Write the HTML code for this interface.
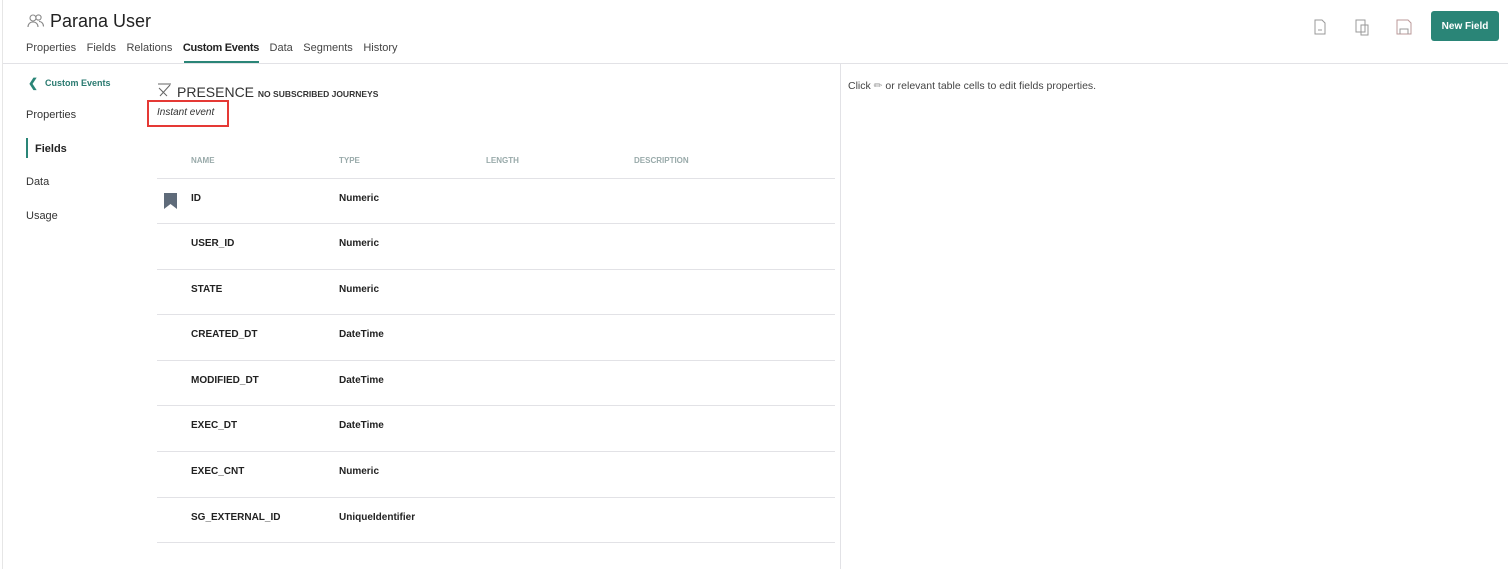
<!DOCTYPE html><html><head><style>
body{margin:0;width:1508px;height:569px;background:#fff;font-family:"Liberation Sans",sans-serif;color:#333;position:relative;overflow:hidden}
.a{position:absolute;white-space:nowrap}
.hl{position:absolute;height:1px;background:#e2e2e6}
.nm{font-size:10px;font-weight:bold;color:#222}
</style></head><body>
<div class="a" style="left:2px;top:0;width:1px;height:569px;background:#e6e6e6"></div>
<svg class="a" style="left:27px;top:13px" width="18" height="16" viewBox="0 0 18 16" fill="none" stroke="#888" stroke-width="1.1"><circle cx="6" cy="5" r="3"/><path d="M1 14c0-3 2-5 5-5s5 2 5 5"/><circle cx="11.5" cy="4.5" r="2.6"/><path d="M12 8.5c2.5 0 4.5 2 4.5 5"/></svg>
<div class="a" style="left:50px;top:11px;font-size:18px;color:#222">Parana User</div>
<div class="a" style="left:26px;top:42px;font-size:11px;color:#444"><span style="margin-right:10.5px">Properties</span><span style="margin-right:10.5px">Fields</span><span style="margin-right:10.5px">Relations</span><b style="color:#222;margin-right:10.5px;letter-spacing:-0.3px">Custom Events</b><span style="margin-right:10.5px">Data</span><span style="margin-right:10.5px">Segments</span><span>History</span></div>
<div class="a" style="left:184px;top:61px;width:75px;height:2px;background:#2a8577"></div>
<div class="hl" style="left:3px;top:63px;width:1505px"></div>
<svg class="a" style="left:1312px;top:18px" width="16" height="18" viewBox="0 0 16 18" fill="none" stroke="#999"><path d="M3 2h7l3 3v11H3z"/><path d="M6 12h4"/></svg>
<svg class="a" style="left:1353px;top:17px" width="18" height="20" viewBox="0 0 18 20" fill="none" stroke="#999"><path d="M3 3h9v12H3z"/><path d="M8 8h7v10H8z"/></svg>
<svg class="a" style="left:1396px;top:19px" width="16" height="16" viewBox="0 0 16 16" fill="none" stroke="#b99"><path d="M1 1h11l3 3v11H1z"/><path d="M4 15v-5h8v5" stroke="#999"/></svg>
<div class="a" style="left:1431px;top:11px;width:68px;height:30px;background:#2a8577;border-radius:3px;color:#fff;font-size:10px;font-weight:bold;text-align:center;line-height:31px">New Field</div>
<div class="a" style="left:28px;top:76px;color:#2a8577;font-size:12px;font-weight:bold">&#10094;</div>
<div class="a" style="left:45px;top:78px;font-size:9px;font-weight:bold;color:#2a7a70">Custom Events</div>
<div class="a" style="left:26px;top:109px;font-size:11px">Properties</div>
<div class="a" style="left:26px;top:138px;width:2px;height:20px;background:#2a8577"></div>
<div class="a" style="left:35px;top:143px;font-size:11px;font-weight:bold;color:#222">Fields</div>
<div class="a" style="left:26px;top:176px;font-size:11px">Data</div>
<div class="a" style="left:26px;top:210px;font-size:11px">Usage</div>
<svg class="a" style="left:157px;top:83px" width="15" height="14" viewBox="0 0 15 14" fill="none" stroke="#666"><path d="M1 1h13M3 13L13 2M2 5l8 8"/></svg>
<div class="a" style="left:177px;top:84px;font-size:14px;color:#333">PRESENCE <span style="font-size:8.5px;font-weight:bold">NO SUBSCRIBED JOURNEYS</span></div>
<div class="a" style="left:147px;top:100px;width:82px;height:27px;border:2px solid #e53935;box-sizing:border-box"></div>
<div class="a" style="left:157px;top:107px;font-size:10px;font-style:italic;color:#333">Instant event</div>
<div class="a" style="left:191px;top:156px;font-size:8px;font-weight:bold;color:#9aa">NAME</div>
<div class="a" style="left:339px;top:156px;font-size:8px;font-weight:bold;color:#9aa">TYPE</div>
<div class="a" style="left:486px;top:156px;font-size:8px;font-weight:bold;color:#9aa">LENGTH</div>
<div class="a" style="left:634px;top:156px;font-size:8px;font-weight:bold;color:#9aa">DESCRIPTION</div>
<div class="hl" style="left:157px;top:178px;width:678px"></div>
<div class="hl" style="left:157px;top:223px;width:678px"></div>
<div class="hl" style="left:157px;top:269px;width:678px"></div>
<div class="hl" style="left:157px;top:314px;width:678px"></div>
<div class="hl" style="left:157px;top:360px;width:678px"></div>
<div class="hl" style="left:157px;top:405px;width:678px"></div>
<div class="hl" style="left:157px;top:451px;width:678px"></div>
<div class="hl" style="left:157px;top:497px;width:678px"></div>
<div class="hl" style="left:157px;top:542px;width:678px"></div>
<svg class="a" style="left:164px;top:193px" width="14" height="16" viewBox="0 0 14 16"><path d="M0 0h13v16l-6.5-5L0 16z" fill="#5f6b7a"/></svg>
<div class="a nm" style="left:191px;top:193px">ID</div><div class="a nm" style="left:339px;top:193px">Numeric</div>
<div class="a nm" style="left:191px;top:238px">USER_ID</div><div class="a nm" style="left:339px;top:238px">Numeric</div>
<div class="a nm" style="left:191px;top:284px">STATE</div><div class="a nm" style="left:339px;top:284px">Numeric</div>
<div class="a nm" style="left:191px;top:329px">CREATED_DT</div><div class="a nm" style="left:339px;top:329px">DateTime</div>
<div class="a nm" style="left:191px;top:375px">MODIFIED_DT</div><div class="a nm" style="left:339px;top:375px">DateTime</div>
<div class="a nm" style="left:191px;top:420px">EXEC_DT</div><div class="a nm" style="left:339px;top:420px">DateTime</div>
<div class="a nm" style="left:191px;top:466px">EXEC_CNT</div><div class="a nm" style="left:339px;top:466px">Numeric</div>
<div class="a nm" style="left:191px;top:512px">SG_EXTERNAL_ID</div><div class="a nm" style="left:339px;top:512px">UniqueIdentifier</div>
<div class="a" style="left:840px;top:64px;width:1px;height:505px;background:#e2e2e6"></div>
<div class="a" style="left:848px;top:80px;font-size:10.5px;color:#444">Click <span style="color:#999">&#9999;</span> or relevant table cells to edit fields properties.</div>
</body></html>
